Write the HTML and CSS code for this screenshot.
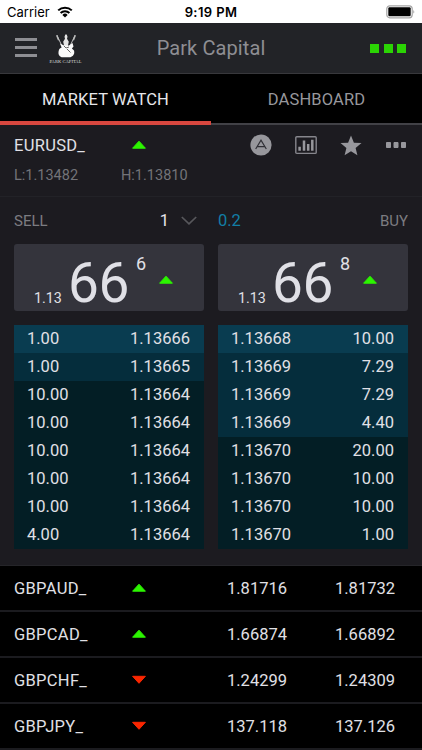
FILE: index.html
```
<!DOCTYPE html>
<html lang="en">
<head>
  <meta charset="UTF-8">
  <title>Park Capital</title>
  <meta name="viewport" content="width=device-width, initial-scale=1.0">
  <link rel="stylesheet" href="styles.css">
</head>
<body>

  <div class="status-bar">
    <div class="carrier">
      <span>Carrier</span>
      <svg width="16" height="12" viewBox="0 0 16 12">
        <path d="M1.2 4.4a9.8 9.8 0 0 1 13.6 0M3.6 7a6.3 6.3 0 0 1 8.8 0" fill="none" stroke="#000" stroke-width="2"/>
        <path d="M8 11.5 5.4 8.9a3.7 3.7 0 0 1 5.2 0z"/>
      </svg>
    </div>
    <div class="clock">9:19 PM</div>
    <svg class="battery" width="30" height="14" viewBox="0 0 30 14">
      <rect x=".8" y=".8" width="25.4" height="12" rx="3" fill="#fff" stroke="#a5a5a5" stroke-width="1.2"/>
      <rect x="2.3" y="2.3" width="22.4" height="9" rx="1.2"/>
      <path d="M27.4 4.8q1.8 2 0 4z" fill="#999"/>
    </svg>
  </div>

  <header class="header">
    <div class="header-left">
      <div class="menu"><i></i><i></i><i></i></div>
      <div class="logo">
        <svg width="24" height="25" viewBox="0 0 24 25">
          <path d="M3 1.5 8 12M21 1.5 16 12" stroke="#ccc" stroke-width=".9"/>
          <path d="M2 1.5 3.6 1 5.3 6 4 6.5zM22 1.5 20.4 1 18.7 6 20 6.5z" fill="#bbb"/>
          <path d="M11.3.5h1.4l.8 2.2-.5 2 1.8 3-1 4.5h-3.6l-1-4.5L11 4.7l-.5-2z" fill="#e4e4e4"/>
          <path d="M6 9.5 10 11.5h5l3.5-2.5 1 3.5-1.6 2 2.1 2c1 3.5-1 5.8-3.6 6.8H7.6C5 22.3 4 20 4.6 17.2c.5-2.3 1.9-3.2 3-3.6z" fill="#fafafa"/>
          <path d="m10 12 2 2 3-1M13 15l3.5 3.5" fill="none" stroke="#555" stroke-width=".9"/>
        </svg>
        <span>PARK CAPITAL</span>
      </div>
    </div>
    <h1>Park Capital</h1>
    <div class="signal"><i></i><i></i><i></i></div>
  </header>

  <nav class="tabs">
    <a class="tab active">MARKET WATCH</a>
    <a class="tab">DASHBOARD</a>
  </nav>

  <section class="details">
    <div class="instrument">
      <div class="instrument-info">
        <div class="symbol">EURUSD_</div>
        <svg class="arrow" width="16" height="10" viewBox="0 0 16 10"><path class="up" d="M8 1.2 14.4 8.2H1.6z"/></svg>
        <div class="low">L:1.13482</div>
        <div class="high">H:1.13810</div>
      </div>
      <div class="actions">
        <svg width="22" height="22" viewBox="0 0 22 22">
          <circle cx="11" cy="11" r="10.6" fill="#97979c"/>
          <path d="M5.7 15 11 6.2 16.3 15M7 12.6h8" fill="none" stroke="#303036" stroke-width="1.2"/>
        </svg>
        <svg width="22" height="19" viewBox="0 0 22 19">
          <rect x=".8" y=".8" width="20.4" height="16.6" rx="1" fill="none" stroke="#86868c" stroke-width="1.4"/>
          <path d="M4.6 14.8v-4M9 14.8V4.5M13.2 14.8V8M17.3 14.8V3.7" stroke="#97979c" stroke-width="2.5"/>
        </svg>
        <svg width="22" height="21" viewBox="0 0 22 21">
          <path d="m11 .6 2.9 7.1 7.6.4-5.9 4.8 1.8 7.3-6.4-4-6.4 4 1.8-7.3L.5 8.1l7.6-.4z" fill="#97979c"/>
        </svg>
        <svg width="22" height="8" viewBox="0 0 22 8">
          <path d="M1.5 1.5h4v5h-4zM9 1.5h4v5H9zM16.5 1.5h4v5h-4z" fill="#97979c" stroke="#97979c" stroke-linejoin="round"/>
        </svg>
      </div>
    </div>

    <div class="trade">
      <div class="side">
        <div class="side-head">
          <span>SELL</span>
          <span class="volume">1
            <svg width="16" height="9" viewBox="0 0 16 9"><path d="M.8 1 8 7.8 15.2 1" fill="none" stroke="#57575b" stroke-width="1.7"/></svg>
          </span>
        </div>
        <button class="quote">
          <span class="base">1.13</span><span class="pips">66</span><span class="fraction">6</span>
          <svg width="16" height="10" viewBox="0 0 16 10"><path class="up" d="M8 1.2 14.4 8.2H1.6z"/></svg>
        </button>
        <div class="depth">
          <div class="level best"><span>1.00</span><span>1.13666</span></div>
          <div class="level near"><span>1.00</span><span>1.13665</span></div>
          <div class="level"><span>10.00</span><span>1.13664</span></div>
          <div class="level"><span>10.00</span><span>1.13664</span></div>
          <div class="level"><span>10.00</span><span>1.13664</span></div>
          <div class="level"><span>10.00</span><span>1.13664</span></div>
          <div class="level"><span>10.00</span><span>1.13664</span></div>
          <div class="level"><span>4.00</span><span>1.13664</span></div>
        </div>
      </div>

      <div class="side">
        <div class="side-head">
          <span class="spread">0.2</span>
          <span>BUY</span>
        </div>
        <button class="quote">
          <span class="base">1.13</span><span class="pips">66</span><span class="fraction">8</span>
          <svg width="16" height="10" viewBox="0 0 16 10"><path class="up" d="M8 1.2 14.4 8.2H1.6z"/></svg>
        </button>
        <div class="depth">
          <div class="level best"><span>1.13668</span><span>10.00</span></div>
          <div class="level near"><span>1.13669</span><span>7.29</span></div>
          <div class="level near"><span>1.13669</span><span>7.29</span></div>
          <div class="level near"><span>1.13669</span><span>4.40</span></div>
          <div class="level"><span>1.13670</span><span>20.00</span></div>
          <div class="level"><span>1.13670</span><span>10.00</span></div>
          <div class="level"><span>1.13670</span><span>10.00</span></div>
          <div class="level"><span>1.13670</span><span>1.00</span></div>
        </div>
      </div>
    </div>
  </section>

  <section class="watchlist">
    <div class="row">
      <span class="symbol">GBPAUD_</span>
      <svg class="arrow" width="16" height="10" viewBox="0 0 16 10"><path class="up" d="M8 1.2 14.4 8.2H1.6z"/></svg>
      <span class="price">1.81716</span><span class="price">1.81732</span>
    </div>
    <div class="row">
      <span class="symbol">GBPCAD_</span>
      <svg class="arrow" width="16" height="10" viewBox="0 0 16 10"><path class="up" d="M8 1.2 14.4 8.2H1.6z"/></svg>
      <span class="price">1.66874</span><span class="price">1.66892</span>
    </div>
    <div class="row">
      <span class="symbol">GBPCHF_</span>
      <svg class="arrow" width="16" height="10" viewBox="0 0 16 10"><path class="down" d="M8 8.3 1.6 1.3h12.8z"/></svg>
      <span class="price">1.24299</span><span class="price">1.24309</span>
    </div>
    <div class="row">
      <span class="symbol">GBPJPY_</span>
      <svg class="arrow" width="16" height="10" viewBox="0 0 16 10"><path class="down" d="M8 8.3 1.6 1.3h12.8z"/></svg>
      <span class="price">137.118</span><span class="price">137.126</span>
    </div>
  </section>

</body>
</html>
```
FILE: styles.css
```
* {
  box-sizing: border-box;
}

body {
  margin: 0;
  height: 750px;
  overflow: hidden;
  background: #000;
  color: #e0e0e6;
  font-family: Roboto, sans-serif;
  font-size: 16.5px;
}

svg {
  display: block;
  flex: none;
}

.up {
  fill: #2cf500;
  stroke: #2cf500;
  stroke-linejoin: round;
}

.down {
  fill: #fa2600;
  stroke: #fa2600;
  stroke-linejoin: round;
}

.symbol {
  letter-spacing: 0.3px;
}

/* Status bar */
.status-bar {
  display: grid;
  grid-template-columns: 1fr auto 1fr;
  align-items: center;
  height: 23px;
  padding: 1px 7px 0 7px;
  background: #fff;
  color: #000;
  font-family: Inter, sans-serif;
  font-size: 13px;
}

.carrier {
  display: flex;
  align-items: center;
  gap: 7px;
}

.clock {
  font-weight: 600;
  letter-spacing: 0.4px;
}

.battery {
  justify-self: end;
  margin-right: -1px;
}

/* Header */
.header {
  display: grid;
  grid-template-columns: 1fr auto 1fr;
  align-items: center;
  height: 51px;
  padding: 0 15px 1px;
  background: #222327;
  border-bottom: 1px solid #38383c;
}

.header h1 {
  margin: 0;
  font-size: 20px;
  font-weight: 400;
  letter-spacing: 0.1px;
  color: #8e8e93;
}

.header-left {
  display: flex;
  align-items: center;
  gap: 12px;
}

.menu {
  display: flex;
  flex-direction: column;
  gap: 5px;
}

.menu i {
  width: 22px;
  height: 3px;
  background: #8e8e93;
}

.logo {
  display: flex;
  flex-direction: column;
  align-items: center;
  width: 33px;
  margin-top: 3px;
}

.logo span {
  font: 4.6px/5px "Liberation Serif", serif;
  color: #ddd;
  white-space: nowrap;
}

.signal {
  display: flex;
  justify-content: flex-end;
  gap: 4.5px;
  margin: 2px 1px 0 0;
}

.signal i {
  width: 9px;
  height: 9px;
  background: #2bd404;
}

/* Tabs */
.tabs {
  display: flex;
  height: 51px;
}

.tab {
  display: flex;
  flex: 1;
  align-items: center;
  justify-content: center;
  padding-top: 2px;
  border-bottom: 2px solid #414146;
  color: #97979c;
  letter-spacing: 0.15px;
}

.tab.active {
  padding-top: 4px;
  border-bottom: 4px solid #d8473f;
  color: #e6e6ea;
}

/* Selected instrument */
.details {
  height: 441px;
  background: #1c1b20;
  border-bottom: 1px solid #252529;
}

.instrument {
  display: flex;
  justify-content: space-between;
  height: 72px;
  padding: 10px 15px 0 14px;
  border-bottom: 1px solid #222227;
}

.instrument-info {
  display: grid;
  grid-template-columns: 107px 90px;
  grid-template-rows: 20px 40px;
  align-items: center;
}

.instrument-info .arrow {
  margin-left: 10px;
}

.low,
.high {
  font-size: 14.5px;
  color: #737378;
}

.actions {
  display: flex;
  align-items: center;
  gap: 23px;
  height: 20px;
}

.trade {
  display: flex;
  gap: 14px;
  padding: 11px 14px 0;
}

.side {
  flex: 1;
}

.side-head {
  display: flex;
  align-items: center;
  justify-content: space-between;
  height: 25px;
  margin-bottom: 11px;
  font-size: 15px;
  color: #7c7c81;
}

.volume {
  display: flex;
  align-items: center;
  gap: 12px;
  padding-right: 7px;
  font-size: 16.5px;
  color: #e6e6ea;
}

.spread {
  font-size: 16.5px;
  color: #127fa6;
}

.quote {
  display: flex;
  width: 100%;
  height: 67px;
  margin-bottom: 14px;
  padding: 0 0 0 20px;
  border: none;
  border-radius: 3px;
  background: #34343c;
  color: inherit;
  font-family: inherit;
}

.base {
  margin-top: 46px;
  font-size: 14.3px;
  line-height: 17px;
}

.pips {
  margin: 7px 7px 0 6px;
  font-size: 55px;
  line-height: 64px;
  letter-spacing: -0.3px;
}

.fraction {
  margin-top: 10px;
  font-size: 18px;
  line-height: 20px;
}

.quote svg {
  margin: 31px 0 0 12px;
}

/* Market depth */
.level {
  display: flex;
  align-items: center;
  justify-content: space-between;
  height: 28px;
  padding: 0 14px 2px 13px;
  background: #031e25;
}

.level.best {
  background: #093c50;
}

.level.near {
  background: #052d3c;
}

/* Watchlist */
.row {
  display: grid;
  grid-template-columns: 117px 48px 108px 108px;
  align-items: center;
  height: 46px;
  padding-left: 14px;
  border-bottom: 2px solid #1b1b1f;
}

.price {
  text-align: right;
}
```
